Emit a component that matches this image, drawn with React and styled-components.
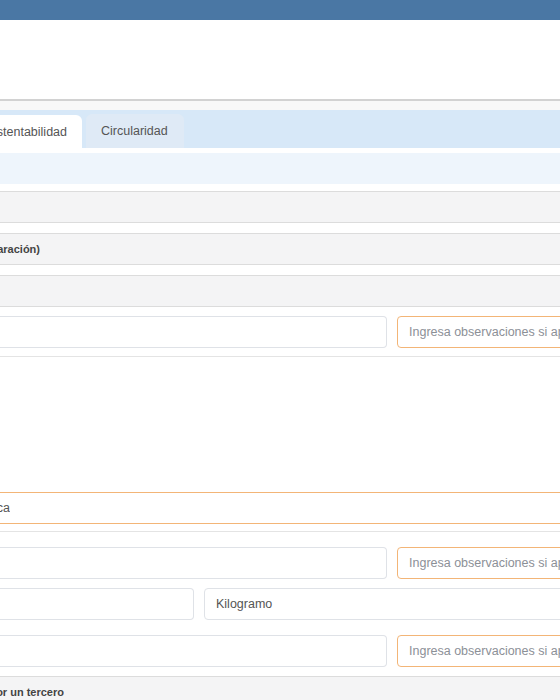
import React from "react";
import styled, { createGlobalStyle } from "styled-components";

const Global = createGlobalStyle`
  html, body { margin: 0; padding: 0; background: #fff; }
  body { overflow: hidden; font-family: "Liberation Sans", Arial, sans-serif; }
  #root { width: 560px; overflow: hidden; }
`;

const Canvas = styled.div`
  width: 620px;
  display: flex;
  flex-direction: column;
`;

const TopBar = styled.div`
  height: 20px;
  background: #4a77a4;
`;

const Header = styled.div`
  height: 79px;
  background: #fff;
  border-bottom: 2px solid #d2d2d2;
`;

const Strip = styled.div`
  height: 9px;
  background: #f8f8f8;
`;

const TabBar = styled.div`
  height: 38px;
  background: #d7e8f8;
  display: flex;
  align-items: flex-end;
  gap: 4px;
`;

const Tab = styled.div`
  height: ${({ $active }) => ($active ? "33px" : "34px")};
  background: ${({ $active }) => ($active ? "#ffffff" : "#dfeaf6")};
  border-radius: ${({ $active }) => ($active ? "0 6px 0 0" : "6px 6px 0 0")};
  display: flex;
  align-items: center;
  font-size: 12.5px;
  color: #555;
  padding: ${({ $active }) => ($active ? "0 15px 0 0" : "0 16px 0 15px")};
`;

// text whose start is cut by the left edge of the view
const Clip = styled.div`
  width: ${({ $end }) => $end}px;
  display: flex;
  justify-content: flex-end;
  overflow: hidden;
  white-space: nowrap;
  flex-shrink: 0;
`;

const InfoBand = styled.div`
  height: 31px;
  margin: 5px 0 7px;
  background: #eef5fc;
`;

const SectionBand = styled.div`
  height: 30px;
  margin-bottom: ${({ $mb = 10 }) => $mb}px;
  background: #f4f4f5;
  border-top: 1px solid #dcdcdc;
  border-bottom: 1px solid #dcdcdc;
  display: flex;
  align-items: center;
  font-size: 11px;
  font-weight: bold;
  color: #444;
`;

const FieldRow = styled.div`
  display: grid;
  grid-template-columns: ${({ $left = 387 }) => $left}px 1fr;
  gap: 10px;
  padding: ${({ $pad = "0" }) => $pad};
  margin-bottom: ${({ $mb = 0 }) => $mb}px;
  ${({ $line }) => $line && `border-bottom: 1px solid #e4e4e4;`}
`;

const Field = styled.div`
  box-sizing: border-box;
  height: 32px;
  border: 1px solid ${({ $warn }) => ($warn ? "#f3b577" : "#dfe2e7")};
  border-radius: 4px;
  ${({ $cut }) => $cut && `border-left: none; border-radius: 0 4px 4px 0;`}
  background: #fff;
  display: flex;
  align-items: center;
  padding-left: ${({ $cut }) => ($cut ? 0 : 11)}px;
  font-size: 12.5px;
  color: ${({ $placeholder }) => ($placeholder ? "#8c9097" : "#555")};
  white-space: nowrap;
  overflow: hidden;
`;

const Blank = styled.div`
  height: 135px;
`;

const Divider = styled.div`
  height: 1px;
  background: #e4e4e4;
  margin: 7px 0 15px;
`;

export default function App() {
  return (
    <>
      <Global />
      <Canvas>
        <TopBar />
        <Header />
        <Strip />
        <TabBar>
          <Tab $active>
            <Clip $end={67}>Sustentabilidad</Clip>
          </Tab>
          <Tab>Circularidad</Tab>
        </TabBar>
        <InfoBand />
        <SectionBand />
        <SectionBand>
          <Clip $end={40}>Datos del residuo (Separación)</Clip>
        </SectionBand>
        <SectionBand $mb={0} />
        <FieldRow $pad="9px 0 8px" $line>
          <Field $cut />
          <Field $warn $placeholder>Ingresa observaciones si aplica</Field>
        </FieldRow>
        <Blank />
        <Field $warn $cut>
          <Clip $end={10}>Persona jurídica</Clip>
        </Field>
        <Divider />
        <FieldRow $mb={9}>
          <Field $cut />
          <Field $warn $placeholder>Ingresa observaciones si aplica</Field>
        </FieldRow>
        <FieldRow $left={194} $mb={15}>
          <Field $cut />
          <Field>Kilogramo</Field>
        </FieldRow>
        <FieldRow $mb={9}>
          <Field $cut />
          <Field $warn $placeholder>Ingresa observaciones si aplica</Field>
        </FieldRow>
        <SectionBand>
          <Clip $end={64}>Gestionado por un tercero</Clip>
        </SectionBand>
      </Canvas>
    </>
  );
}
